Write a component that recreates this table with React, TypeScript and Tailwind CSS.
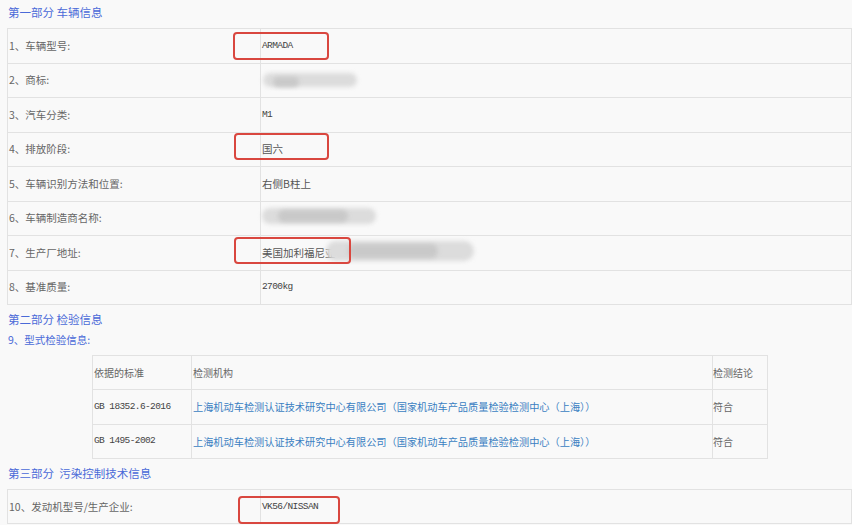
import React from "react";

const cjk = { fontFamily: '"Noto Sans CJK SC", "Noto Sans", sans-serif' };
const mono = { fontFamily: '"Liberation Mono", "Noto Sans CJK SC", monospace' };

type Row = { label: string; value: React.ReactNode; mono?: boolean; extra?: React.ReactNode };

function RedBox({ left, top, w, h }: { left: number; top: number; w: number; h: number }) {
  return (
    <div
      className="absolute border-2 border-[#d9473f] rounded-[4px] pointer-events-none"
      style={{ left, top, width: w, height: h }}
    />
  );
}

function Blob({ left, top, w, h, dark }: { left: number; top: number; w: number; h: number; dark?: boolean }) {
  return (
    <div
      className={`absolute rounded-full blur-[2px] ${dark ? "bg-[#c9c9c9]" : "bg-[#dcdcdc]"}`}
      style={{ left, top, width: w, height: h }}
    />
  );
}

export default function App() {
  const rows: Row[] = [
    { label: "1、车辆型号:", value: "ARMADA", mono: true, extra: <RedBox left={225} top={3} w={96} h={28} /> },
    {
      label: "2、商标:",
      value: "",
      extra: (
        <>
          <Blob left={255} top={9} w={94} h={14} />
          <Blob left={265} top={13} w={26} h={10} dark />
        </>
      ),
    },
    { label: "3、汽车分类:", value: "M1", mono: true },
    { label: "4、排放阶段:", value: "国六", extra: <RedBox left={226} top={0} w={95} h={27} /> },
    { label: "5、车辆识别方法和位置:", value: "右侧B柱上" },
    {
      label: "6、车辆制造商名称:",
      value: "",
      extra: (
        <>
          <Blob left={254} top={6} w={114} h={16} />
          <Blob left={270} top={8} w={70} h={12} dark />
        </>
      ),
    },
    {
      label: "7、生产厂地址:",
      value: "美国加利福尼亚",
      extra: (
        <>
          <Blob left={318} top={5} w={148} h={20} />
          <Blob left={340} top={8} w={90} h={14} dark />
          <RedBox left={226} top={1} w={117} h={27} />
        </>
      ),
    },
    { label: "8、基准质量:", value: "2700kg", mono: true },
  ];

  const Cell = ({ r }: { r: Row }) => (
    <div className="relative flex h-[34.5px] border-b border-[#e2e2e2]">
      <div className="w-[253px] shrink-0 flex items-center pl-[1px] border-r border-[#e2e2e2] text-[10.5px] text-[#666]" style={cjk}>
        {r.label}
      </div>
      <div
        className={`flex items-center pl-[1px] ${r.mono ? "text-[9.5px] tracking-[-0.6px] text-[#444]" : "text-[10.5px] text-[#555]"}`}
        style={r.mono ? mono : cjk}
      >
        {r.value}
      </div>
      {r.extra}
    </div>
  );

  const org = "上海机动车检测认证技术研究中心有限公司（国家机动车产品质量检验检测中心（上海））";
  const insp = [
    ["GB 18352.6-2016", org, "符合"],
    ["GB 1495-2002", org, "符合"],
  ];

  return (
    <div className="w-[852px] h-[525px] bg-[#f9f9f9] overflow-hidden" style={cjk}>
      <div className="h-[28px] flex items-center pl-[8px] pb-[2px] text-[11.5px] text-[#4a6ad8]">第一部分 车辆信息</div>
      <div className="ml-[7px] w-[845px] border-t border-l border-r border-[#e2e2e2]">
        {rows.map((r, i) => (
          <Cell key={i} r={r} />
        ))}
      </div>

      <div className="mt-[3px] h-[24px] flex items-center pl-[8px] text-[11.5px] text-[#4a6ad8]">第二部分 检验信息</div>
      <div className="h-[16px] flex items-center pl-[8px] text-[10.5px] text-[#4a6ad8]">9、型式检验信息:</div>

      <div className="mt-[7px] ml-[92px] w-[676px] border-t border-l border-r border-[#e2e2e2]">
        <div className="flex h-[34.3px] border-b border-[#e2e2e2] text-[10px] text-[#666]">
          <div className="w-[99px] shrink-0 flex items-center pl-[1px] border-r border-[#e2e2e2]">依据的标准</div>
          <div className="w-[521px] shrink-0 flex items-center pl-[1px] border-r border-[#e2e2e2]">检测机构</div>
          <div className="flex items-center">检测结论</div>
        </div>
        {insp.map((r, i) => (
          <div key={i} className="flex h-[34.3px] border-b border-[#e2e2e2]">
            <div className="w-[99px] shrink-0 flex items-center pl-[1px] border-r border-[#e2e2e2] text-[9.5px] tracking-[-0.6px] text-[#444]" style={mono}>
              {r[0]}
            </div>
            <div className="w-[521px] shrink-0 flex items-center pl-[1px] border-r border-[#e2e2e2] text-[10.2px] text-[#3a7fc2]">{r[1]}</div>
            <div className="flex items-center text-[10px] text-[#666]">{r[2]}</div>
          </div>
        ))}
      </div>

      <div className="h-[30px] flex items-center pl-[8px] text-[11.5px] text-[#4a6ad8] whitespace-pre">第三部分  污染控制技术信息</div>
      <div className="ml-[7px] w-[845px] border-t border-l border-r border-[#e2e2e2]">
        <Cell r={{ label: "10、发动机型号/生产企业:", value: "VK56/NISSAN", mono: true, extra: <RedBox left={230} top={6} w={102} h={28} /> }} />
      </div>
    </div>
  );
}
